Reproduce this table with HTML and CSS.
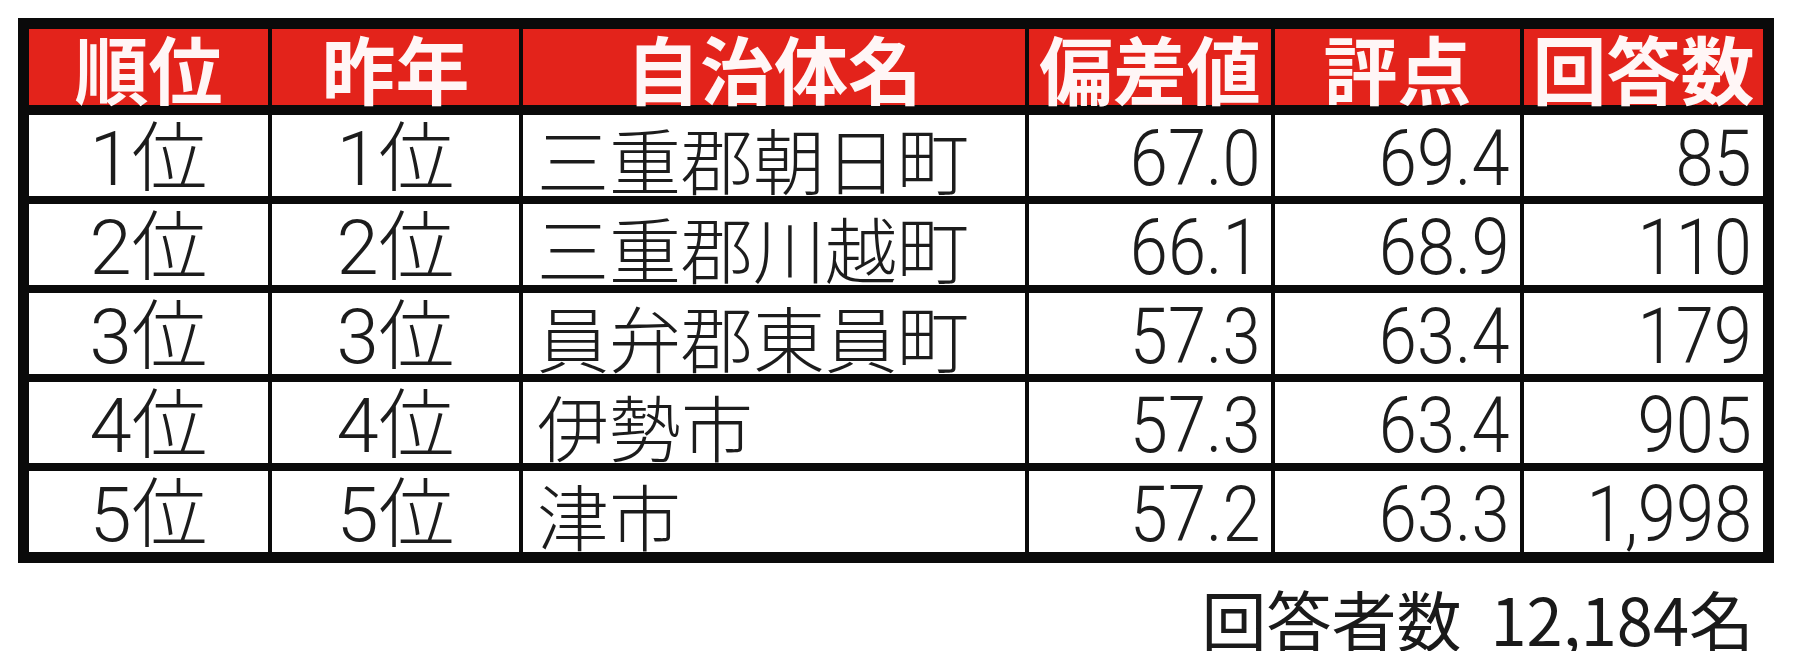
FILE: index.html
```html
<!DOCTYPE html>
<html lang="ja">
<head>
<meta charset="utf-8">
<title>ランキング</title>
<link rel="stylesheet" href="styles.css">
</head>
<body>
<div class="wrap">
  <table class="rank-table">
    <colgroup>
      <col class="c1"><col class="c2"><col class="c3"><col class="c4"><col class="c5"><col class="c6">
    </colgroup>
    <thead>
      <tr>
        <th>順位</th><th>昨年</th><th>自治体名</th><th>偏差値</th><th>評点</th><th>回答数</th>
      </tr>
    </thead>
    <tbody>
      <tr><td class="rank">1位</td><td class="rank">1位</td><td class="name">三重郡朝日町</td><td class="num"><span class="n">67.0</span></td><td class="num"><span class="n">69.4</span></td><td class="num"><span class="n">85</span></td></tr>
      <tr><td class="rank">2位</td><td class="rank">2位</td><td class="name">三重郡川越町</td><td class="num"><span class="n">66.1</span></td><td class="num"><span class="n">68.9</span></td><td class="num"><span class="n">110</span></td></tr>
      <tr><td class="rank">3位</td><td class="rank">3位</td><td class="name">員弁郡東員町</td><td class="num"><span class="n">57.3</span></td><td class="num"><span class="n">63.4</span></td><td class="num"><span class="n">179</span></td></tr>
      <tr><td class="rank">4位</td><td class="rank">4位</td><td class="name">伊勢市</td><td class="num"><span class="n">57.3</span></td><td class="num"><span class="n">63.4</span></td><td class="num"><span class="n">905</span></td></tr>
      <tr><td class="rank">5位</td><td class="rank">5位</td><td class="name">津市</td><td class="num"><span class="n">57.2</span></td><td class="num"><span class="n">63.3</span></td><td class="num"><span class="n">1,998</span></td></tr>
    </tbody>
  </table>
  <p class="total">回答者数&nbsp;&nbsp;12,184名</p>
</div>
</body>
</html>
```
FILE: styles.css
```css
html, body {
  margin: 0;
  padding: 0;
  background: #ffffff;
}

.wrap {
  padding: 18px 26px 0 18px;
  width: 1756px;
}

.rank-table {
  border-collapse: separate;
  border-spacing: 0;
  border: 11px solid #0a0a0a;
  width: 1756px;
  table-layout: fixed;
  color: #1c1c1c;
}

.c1 { width: 243px; }
.c2 { width: 251px; }
.c3 { width: 506px; }
.c4 { width: 246px; }
.c5 { width: 249px; }
.c6 { width: 239px; }

.rank-table th,
.rank-table td {
  padding: 0;
  border-right: 4px solid #0a0a0a;
  white-space: nowrap;
}

.rank-table th:last-child,
.rank-table td:last-child {
  border-right: none;
}

.rank-table th {
  background: #e3231b;
  color: #fff6f6;
  font-family: "Noto Sans CJK JP", sans-serif;
  font-weight: 700;
  font-size: 74px;
  height: 76px;
  line-height: 76px;
  text-align: center;
  border-bottom: 10px solid #0a0a0a;
  vertical-align: middle;
}

.rank-table td {
  height: 81px;
  box-sizing: border-box;
  padding-top: 7px;
  line-height: 74px;
  font-family: "Roboto", "Liberation Sans", "Noto Sans CJK JP", sans-serif;
  font-weight: 300;
  font-size: 78px;
  border-bottom: 8px solid #0a0a0a;
  vertical-align: top;
}

.rank-table tbody tr:last-child td {
  border-bottom: none;
}

.rank-table td.rank {
  text-align: center;
  font-size: 76px;
}

.rank-table td.name {
  text-align: left;
  padding-left: 14px;
  font-size: 72px;
  font-family: "Noto Sans CJK JP", sans-serif;
  line-height: 72px;
}

.rank-table td.num {
  text-align: right;
  padding-right: 11px;
}

.n {
  display: inline-block;
  transform: scaleX(0.88);
  transform-origin: right center;
}

.total {
  margin: 22px 20px 0 0;
  text-align: right;
  font-family: "Noto Sans CJK JP", sans-serif;
  font-size: 65px;
  line-height: 66px;
  color: #1a1a1a;
}
```
